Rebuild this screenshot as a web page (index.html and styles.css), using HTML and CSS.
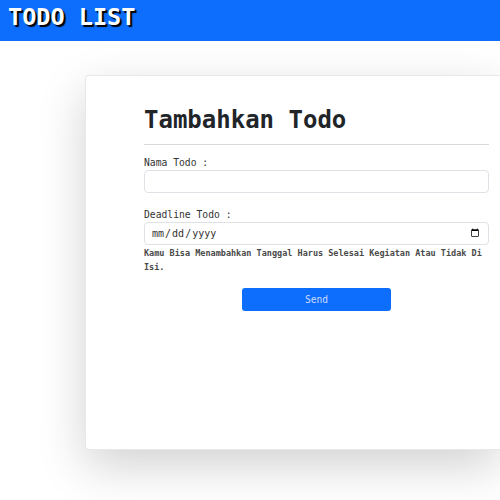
FILE: index.html
```html
<!DOCTYPE html>
<html lang="id">
<head>
<meta charset="utf-8">
<title>Todo List</title>
<link rel="stylesheet" href="styles.css">
</head>
<body>
<header class="topbar">
  <span class="brand">TODO LIST</span>
</header>
<main class="card">
  <div class="content">
    <h1 class="title">Tambahkan Todo</h1>
    <hr class="rule">
    <form class="form">
      <div class="group">
        <label class="label" for="nama">Nama Todo :</label>
        <input class="field" id="nama" type="text">
      </div>
      <div class="group group-date">
        <label class="label" for="deadline">Deadline Todo :</label>
        <input class="field field-date" id="deadline" type="date">
        <p class="hint">Kamu Bisa Menambahkan Tanggal Harus Selesai Kegiatan Atau Tidak Di Isi.</p>
      </div>
      <div class="actions">
        <button class="btn" type="button">Send</button>
      </div>
    </form>
  </div>
</main>
</body>
</html>
```

FILE: styles.css
```css
html {
  overflow: hidden;
}

html, body {
  margin: 0;
  padding: 0;
  background: #ffffff;
}

body {
  font-family: "DejaVu Sans Mono", "Liberation Mono", monospace;
  color: #212529;
  min-height: 500px;
  padding-bottom: 1px;
  box-sizing: border-box;
}

.topbar {
  height: 41px;
  box-sizing: border-box;
  background: #0d6efd;
  padding: 3px 0 0 8px;
  display: flex;
  align-items: flex-start;
}

.brand {
  font-size: 23.5px;
  line-height: 28px;
  font-weight: bold;
  color: #ffffff;
  text-shadow: 2px 2px 1px #000000;
}

.card {
  margin: 34px 0 0 85px;
  height: 375px;
  box-sizing: border-box;
  border: 1px solid rgba(0, 0, 0, 0.09);
  border-right: 0;
  border-radius: 4px 0 0 4px;
  box-shadow: 0 16px 48px rgba(0, 0, 0, 0.18);
  padding: 30px 0 0 58px;
  background: #ffffff;
}

.content {
  width: 345px;
}

.title {
  margin: 0;
  font-size: 24px;
  line-height: 28.8px;
  font-weight: bold;
  color: #212529;
}

.rule {
  margin: 9px 0 12px;
  border: 0;
  border-top: 1px solid #d9d9d9;
  height: 0;
}

.form {
  margin: 0;
}

.group {
  display: flex;
  flex-direction: column;
}

.group-date {
  margin-top: 16px;
}

.label {
  font-size: 9.7px;
  line-height: 12px;
  color: #333333;
  margin-bottom: 1px;
}

.field {
  height: 23px;
  box-sizing: border-box;
  border: 1px solid #dee2e6;
  border-radius: 4px;
  padding: 0 6px;
  font-family: "DejaVu Sans Mono", "Liberation Mono", monospace;
  font-size: 10px;
  color: #333333;
  background: #ffffff;
  width: 100%;
}

.hint {
  margin: 1px 0 0;
  font-size: 8.5px;
  line-height: 14px;
  font-weight: bold;
  color: #4a4a4a;
}

.actions {
  display: flex;
  justify-content: center;
  margin-top: 14px;
}

.btn {
  width: 149px;
  height: 23px;
  border: 0;
  border-radius: 3px;
  background: #0d6efd;
  color: #cddcff;
  font-family: "DejaVu Sans Mono", "Liberation Mono", monospace;
  font-size: 9.6px;
  font-weight: normal;
  padding: 0;
}
```
